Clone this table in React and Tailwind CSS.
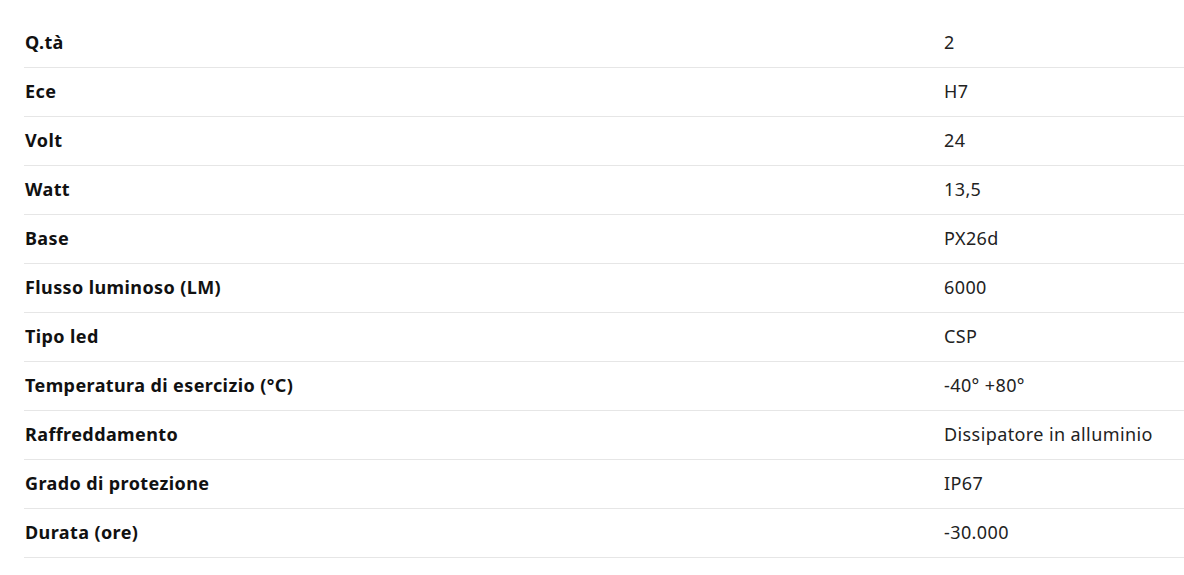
const specs = [
  ['Q.tà', '2'],
  ['Ece', 'H7'],
  ['Volt', '24'],
  ['Watt', '13,5'],
  ['Base', 'PX26d'],
  ['Flusso luminoso (LM)', '6000'],
  ['Tipo led', 'CSP'],
  ['Temperatura di esercizio (°C)', '-40° +80°'],
  ['Raffreddamento', 'Dissipatore in alluminio'],
  ['Grado di protezione', 'IP67'],
  ['Durata (ore)', '-30.000'],
];

export default function App() {
  return (
    <div className="bg-white w-[1184px] h-[575px] overflow-hidden pt-[19px] pl-[24px] font-['Noto_Sans',sans-serif] tracking-[0.4px]">
      <div className="w-[1160px]">
        {specs.map(([label, value]) => (
          <div key={label} className="flex items-center h-[49px] pb-[2px] border-b border-[#e6e6e6]">
            <div className="w-[920px] pl-[1px] text-[18px] font-bold text-[#111]">{label}</div>
            <div className="flex-1 text-[18px] text-[#222]">{value}</div>
          </div>
        ))}
      </div>
    </div>
  );
}
